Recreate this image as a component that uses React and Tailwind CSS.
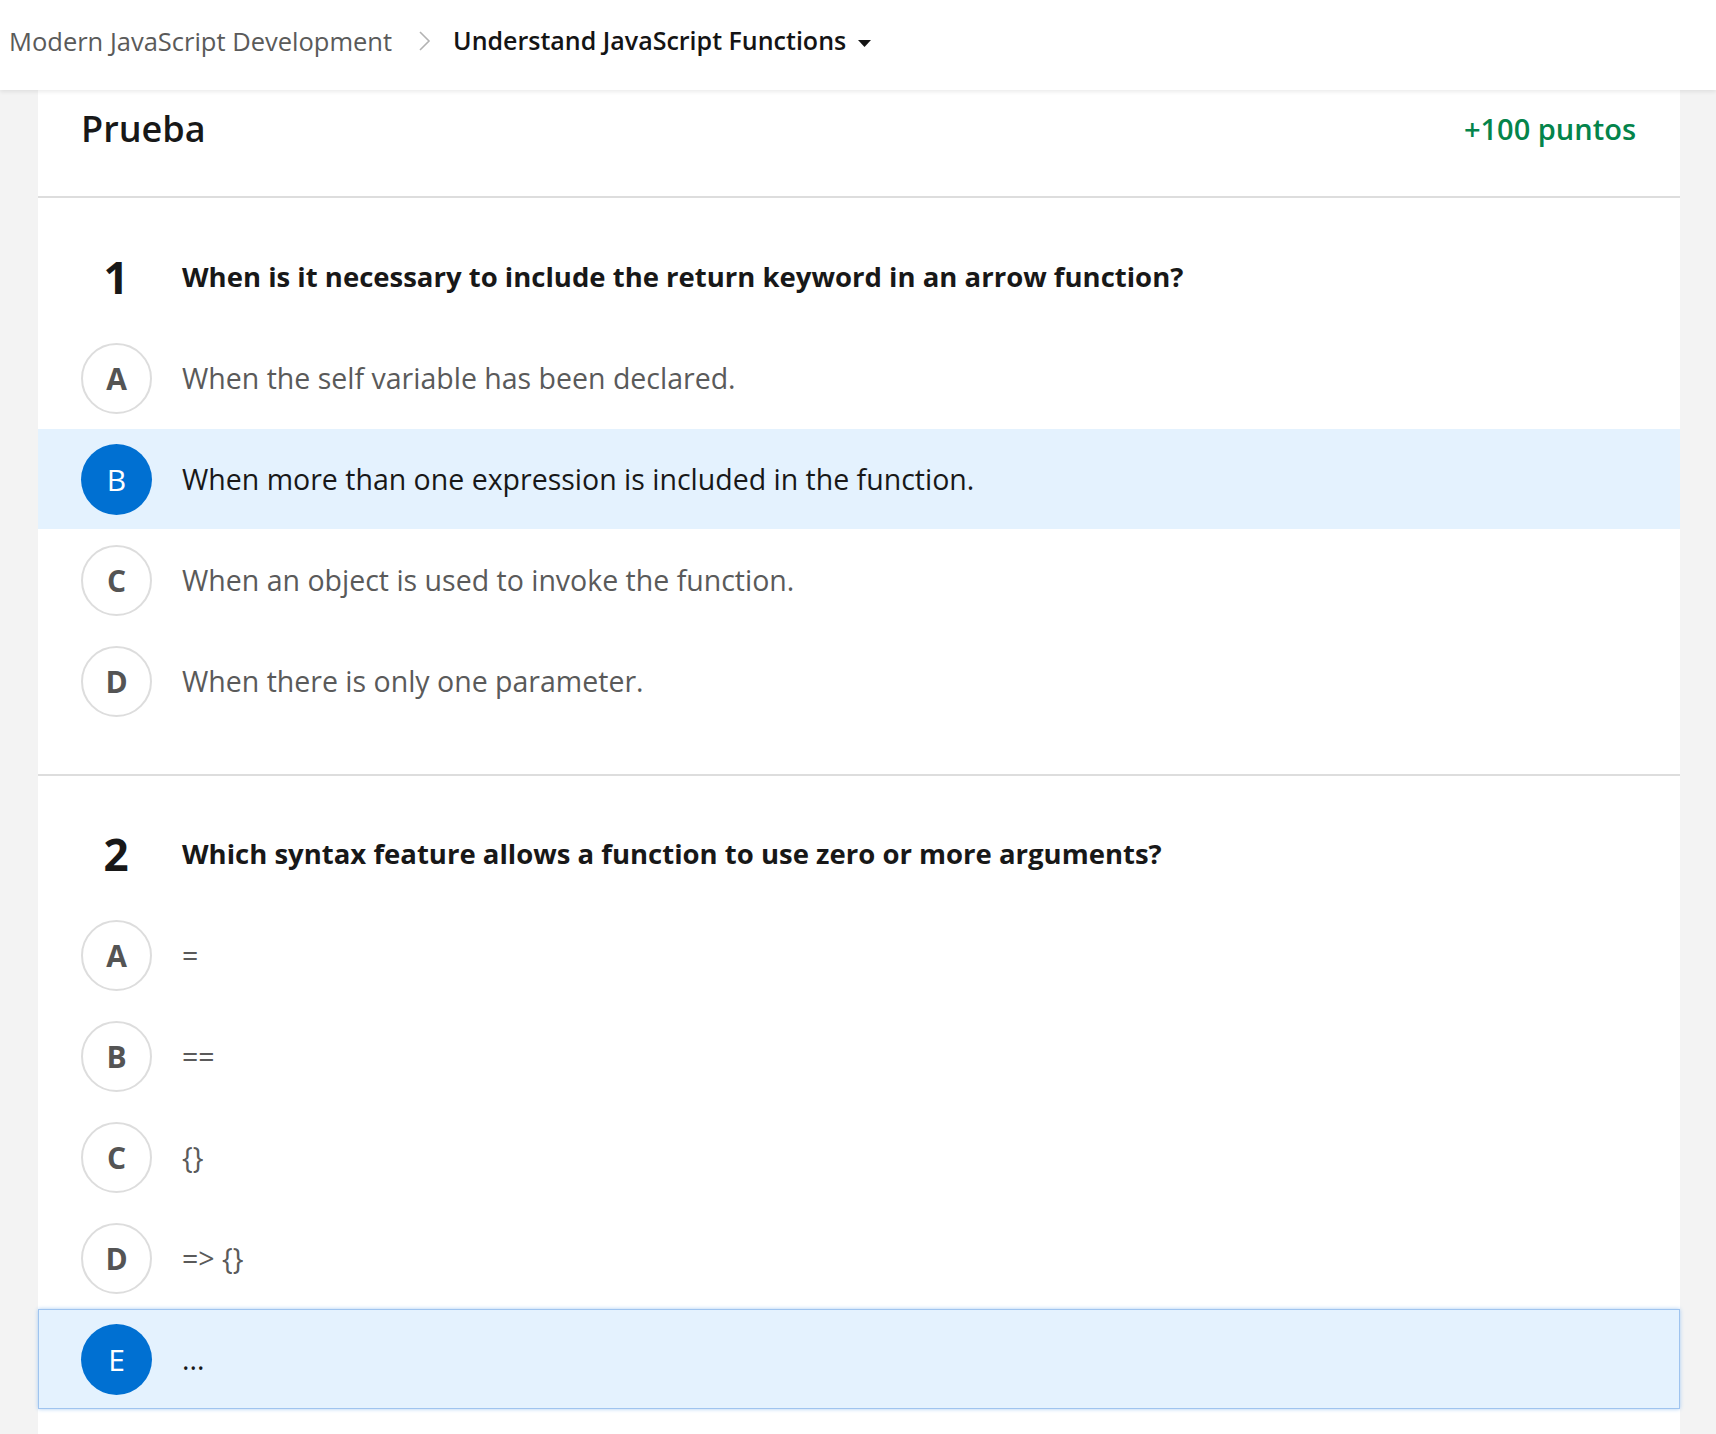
const QUESTIONS = [
  {
    n: 1,
    text: 'When is it necessary to include the return keyword in an arrow function?',
    options: [
      { k: 'A', t: 'When the self variable has been declared.' },
      { k: 'B', t: 'When more than one expression is included in the function.', selected: true },
      { k: 'C', t: 'When an object is used to invoke the function.' },
      { k: 'D', t: 'When there is only one parameter.' },
    ],
  },
  {
    n: 2,
    text: 'Which syntax feature allows a function to use zero or more arguments?',
    options: [
      { k: 'A', t: '=' },
      { k: 'B', t: '==' },
      { k: 'C', t: '{}' },
      { k: 'D', t: '=>\u00a0{}' },
      { k: 'E', t: '...', selected: true, focused: true },
    ],
  },
];

function Option({ opt }) {
  const rowCls = opt.selected
    ? opt.focused
      ? 'bg-[#e4f2fe] border border-[#9fc4ef] shadow-[0_0_4px_#a8ccf3]'
      : 'bg-[#e4f2fe] border border-transparent'
    : 'border border-transparent';
  return (
    <div className={`h-[100px] flex items-center pl-[42px] ${rowCls}`}>
      <div
        className={
          opt.selected
            ? 'w-[71px] h-[71px] shrink-0 rounded-full bg-[#0070d2] text-white flex items-center justify-center text-[30px]'
            : 'w-[71px] h-[71px] shrink-0 rounded-full border-2 border-[#dddddd] text-[#545454] font-bold flex items-center justify-center text-[30px]'
        }
      >
        {opt.k}
      </div>
      <div className={`ml-[30px] text-[28.5px] ${opt.selected ? 'text-[#181818]' : 'text-[#5a5a5a]'}`}>
        {opt.t}
      </div>
    </div>
  );
}

export default function App() {
  return (
    <div className="min-h-[1434px] bg-[#f3f3f3] font-['Open_Sans',sans-serif]">
      {/* breadcrumb bar */}
      <div className="h-[90px] bg-white flex items-center pl-[9px] pb-[8px] shadow-[0_2px_4px_rgba(0,0,0,0.08)] relative z-10">
        <span className="text-[25.5px] text-[#5a5a5a]">Modern JavaScript Development</span>
        <svg className="ml-[26px] mr-[22px]" width="13" height="20" viewBox="0 0 13 20">
          <polyline points="2,1 11,10 2,19" fill="none" stroke="#b3b3b3" strokeWidth="1.6" />
        </svg>
        <span className="text-[25px] font-semibold text-[#141414]">Understand JavaScript Functions</span>
        <svg className="ml-[12px] mt-[6px]" width="13" height="8" viewBox="0 0 13 8">
          <path d="M0 0 L13 0 L6.5 7 Z" fill="#141414" />
        </svg>
      </div>

      <div className="ml-[38px] mr-[36px] bg-white">
        <div className="flex items-center justify-between pl-[43px] pr-[44px] pt-[12px] pb-[40px] border-b-2 border-[#dddddd]">
          <h1 className="text-[36px] leading-[54px] font-semibold text-[#181818]">Prueba</h1>
          <span className="text-[29px] font-semibold text-[#04844b]">+100 puntos</span>
        </div>

        {QUESTIONS.map((q, i) => (
          <div
            key={q.n}
            className={i === 0 ? 'pt-[53px] pb-[43px] border-b-2 border-[#dddddd]' : 'pt-[52px] pb-[44px]'}
          >
            <div className="flex items-center h-[52px] mb-[25px]">
              <div className="w-[150px] text-center text-[44px] leading-none font-bold text-[#181818] pl-[6px]">{q.n}</div>
              <div className="-ml-[6px] text-[27.5px] font-bold text-[#181818]">{q.text}</div>
            </div>
            <div className="flex flex-col gap-[1px]">
              {q.options.map((o) => (
                <Option key={o.k} opt={o} />
              ))}
            </div>
          </div>
        ))}
      </div>
    </div>
  );
}
